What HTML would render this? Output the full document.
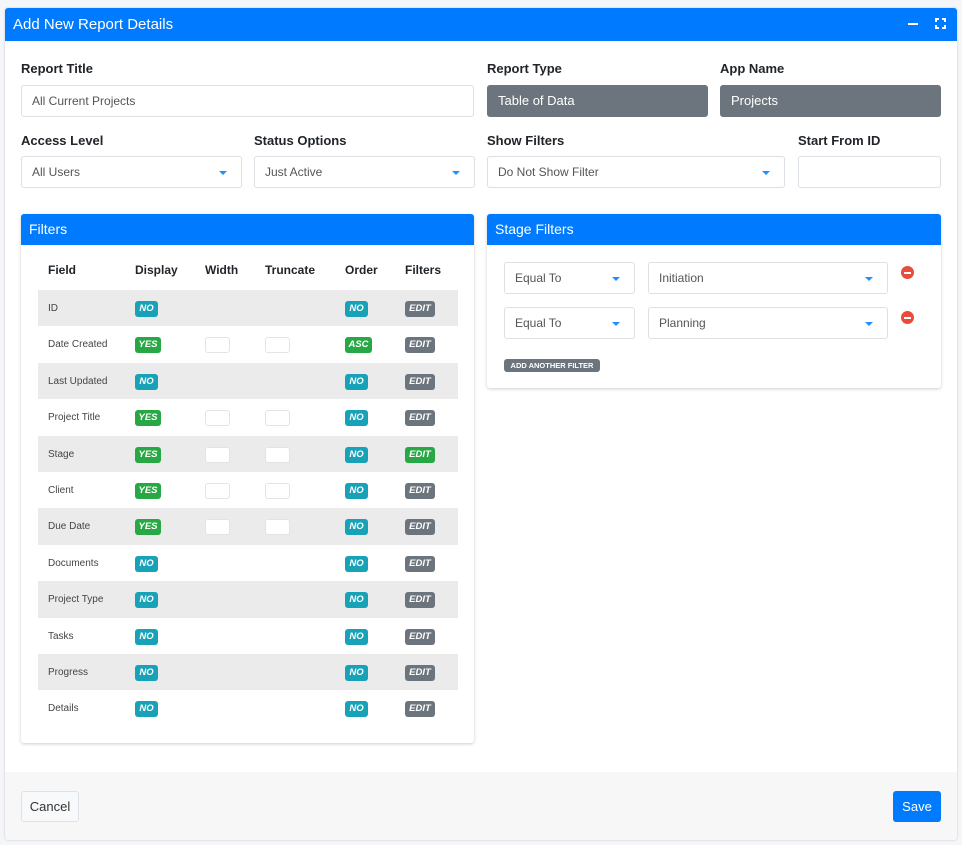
<!DOCTYPE html>
<html><head><meta charset="utf-8"><style>
*{box-sizing:border-box;margin:0;padding:0}
body{width:962px;height:845px;background:#f4f6f9;font-family:"Liberation Sans",sans-serif;position:relative;overflow:hidden;color:#212529}
.a{position:absolute}
.card{left:5px;top:8px;width:952px;height:832px;background:#fff;border-radius:3px;box-shadow:0 0 2px rgba(0,0,0,.2);overflow:hidden}
.hd{left:0;top:0;width:952px;height:33px;background:#007bff;color:#fff;font-size:15px;line-height:33px;padding-left:8px}
.lbl{font-size:13px;font-weight:bold;color:#212529}
.inp{border:1px solid #dcdfe3;border-radius:3px;background:#fff;font-size:12px;color:#555;line-height:30px;padding-left:10px;height:32px}
.gr{background:#6c757d;border-color:#6c757d;color:#fff;font-size:13px}
.car{position:absolute;right:14px;top:14px;width:0;height:0;border-left:4px solid transparent;border-right:4px solid transparent;border-top:4px solid #1e90ff}
.sc{background:#fff;border-radius:3px;box-shadow:0 1px 3px rgba(0,0,0,.2)}
.sh{position:absolute;left:0;top:0;right:0;height:31px;background:#007bff;color:#fff;font-size:14px;line-height:31px;padding-left:8px;border-radius:3px 3px 0 0}
.th{font-size:12px;font-weight:bold;top:263px}
.row{left:38px;width:420px;height:36.4px;font-size:10px;color:#444}
.row span{position:absolute;top:13px;left:10px}
.b{position:absolute;top:11px;height:16px;border-radius:3px;color:#fff;font-size:9.5px;font-weight:bold;line-height:16px;text-align:center}
.no{background:#17a2b8;width:23px}.yes{background:#28a745;width:26px}.asc{background:#28a745;width:27px}.ed{background:#6c757d;width:30px;left:367px}.edg{background:#28a745;width:30px;left:367px}
.box{position:absolute;top:11px;width:25px;height:16px;border:1px solid #e2e4e7;border-radius:3px;background:#fff}
.min{position:absolute;width:13px;height:13px;border-radius:50%;background:#e74c3c}
.min:after{content:"";position:absolute;left:3px;top:5.5px;width:7px;height:2px;background:#fff}
</style></head><body>
<div class="a card">
<div class="a hd">Add New Report Details
<div class="a" style="left:903px;top:15px;width:10px;height:2px;background:#fff"></div>
<svg class="a" style="left:930px;top:10px" width="11" height="11" viewBox="0 0 11 11" fill="none" stroke="#fff" stroke-width="2"><path d="M1 4V1h3M7 1h3v3M10 7v3H7M4 10H1V7"/></svg>
</div>
</div>
<div class="a lbl" style="left:21px;top:61px">Report Title</div>
<div class="a inp" style="left:21px;top:85px;width:453px">All Current Projects</div>
<div class="a lbl" style="left:487px;top:61px">Report Type</div>
<div class="a inp gr" style="left:487px;top:85px;width:221px">Table of Data</div>
<div class="a lbl" style="left:720px;top:61px">App Name</div>
<div class="a inp gr" style="left:720px;top:85px;width:221px">Projects</div>
<div class="a lbl" style="left:21px;top:133px">Access Level</div>
<div class="a inp" style="left:21px;top:156px;width:221px">All Users<div class="car"></div></div>
<div class="a lbl" style="left:254px;top:133px">Status Options</div>
<div class="a inp" style="left:254px;top:156px;width:221px">Just Active<div class="car"></div></div>
<div class="a lbl" style="left:487px;top:133px">Show Filters</div>
<div class="a inp" style="left:487px;top:156px;width:298px">Do Not Show Filter<div class="car"></div></div>
<div class="a lbl" style="left:798px;top:133px">Start From ID</div>
<div class="a inp" style="left:798px;top:156px;width:143px"></div>

<div class="a sc" style="left:21px;top:214px;width:453px;height:529px"><div class="sh">Filters</div></div>
<div class="a th" style="left:48px">Field</div>
<div class="a th" style="left:135px">Display</div>
<div class="a th" style="left:205px">Width</div>
<div class="a th" style="left:265px">Truncate</div>
<div class="a th" style="left:345px">Order</div>
<div class="a th" style="left:405px">Filters</div>

<div class="a row" style="top:290px;background:#ebebeb"><span>ID</span><i class="b no" style="left:97px">NO</i><i class="b no" style="left:307px">NO</i><i class="b ed">EDIT</i></div>
<div class="a row" style="top:326.4px"><span>Date Created</span><i class="b yes" style="left:97px">YES</i><i class="box" style="left:167px"></i><i class="box" style="left:227px"></i><i class="b asc" style="left:307px">ASC</i><i class="b ed">EDIT</i></div>
<div class="a row" style="top:362.8px;background:#ebebeb"><span>Last Updated</span><i class="b no" style="left:97px">NO</i><i class="b no" style="left:307px">NO</i><i class="b ed">EDIT</i></div>
<div class="a row" style="top:399.2px"><span>Project Title</span><i class="b yes" style="left:97px">YES</i><i class="box" style="left:167px"></i><i class="box" style="left:227px"></i><i class="b no" style="left:307px">NO</i><i class="b ed">EDIT</i></div>
<div class="a row" style="top:435.6px;background:#ebebeb"><span>Stage</span><i class="b yes" style="left:97px">YES</i><i class="box" style="left:167px"></i><i class="box" style="left:227px"></i><i class="b no" style="left:307px">NO</i><i class="b edg">EDIT</i></div>
<div class="a row" style="top:472px"><span>Client</span><i class="b yes" style="left:97px">YES</i><i class="box" style="left:167px"></i><i class="box" style="left:227px"></i><i class="b no" style="left:307px">NO</i><i class="b ed">EDIT</i></div>
<div class="a row" style="top:508.4px;background:#ebebeb"><span>Due Date</span><i class="b yes" style="left:97px">YES</i><i class="box" style="left:167px"></i><i class="box" style="left:227px"></i><i class="b no" style="left:307px">NO</i><i class="b ed">EDIT</i></div>
<div class="a row" style="top:544.8px"><span>Documents</span><i class="b no" style="left:97px">NO</i><i class="b no" style="left:307px">NO</i><i class="b ed">EDIT</i></div>
<div class="a row" style="top:581.2px;background:#ebebeb"><span>Project Type</span><i class="b no" style="left:97px">NO</i><i class="b no" style="left:307px">NO</i><i class="b ed">EDIT</i></div>
<div class="a row" style="top:617.6px"><span>Tasks</span><i class="b no" style="left:97px">NO</i><i class="b no" style="left:307px">NO</i><i class="b ed">EDIT</i></div>
<div class="a row" style="top:654px;background:#ebebeb"><span>Progress</span><i class="b no" style="left:97px">NO</i><i class="b no" style="left:307px">NO</i><i class="b ed">EDIT</i></div>
<div class="a row" style="top:690.4px"><span>Details</span><i class="b no" style="left:97px">NO</i><i class="b no" style="left:307px">NO</i><i class="b ed">EDIT</i></div>

<div class="a sc" style="left:487px;top:214px;width:454px;height:174px"><div class="sh">Stage Filters</div></div>
<div class="a inp" style="left:504px;top:262px;width:131px">Equal To<div class="car"></div></div>
<div class="a inp" style="left:648px;top:262px;width:240px">Initiation<div class="car"></div></div>
<div class="min" style="left:901px;top:266px"></div>
<div class="a inp" style="left:504px;top:307px;width:131px">Equal To<div class="car"></div></div>
<div class="a inp" style="left:648px;top:307px;width:240px">Planning<div class="car"></div></div>
<div class="min" style="left:901px;top:311px"></div>
<div class="a" style="left:504px;top:359px;width:96px;height:13px;background:#6c757d;border-radius:3px;color:#fff;font-size:7.5px;font-weight:bold;line-height:13px;text-align:center">ADD ANOTHER FILTER</div>

<div class="a" style="left:5px;top:772px;width:952px;height:68px;background:#f7f7f7;border-radius:0 0 3px 3px"></div>
<div class="a" style="left:21px;top:791px;width:58px;height:31px;border:1px solid #dee2e6;border-radius:3px;background:#f8f9fa;font-size:13px;line-height:29px;text-align:center;color:#333">Cancel</div>
<div class="a" style="left:893px;top:791px;width:48px;height:31px;background:#007bff;border-radius:3px;color:#fff;font-size:13px;line-height:31px;text-align:center">Save</div>
</body></html>
